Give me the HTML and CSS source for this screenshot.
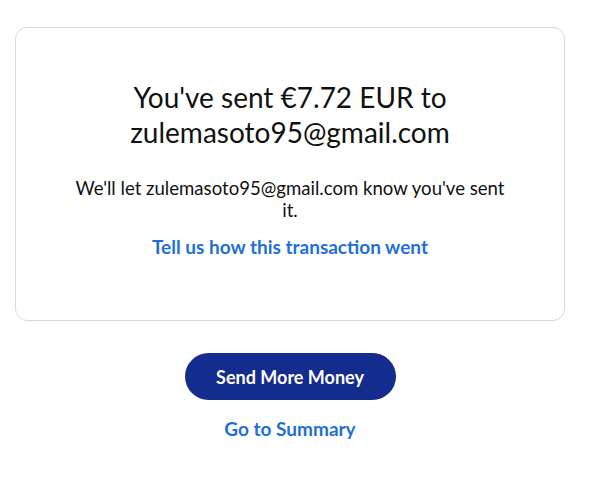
FILE: index.html
```html
<!DOCTYPE html>
<html lang="en">
<head>
<meta charset="utf-8">
<title>Sent</title>
<link rel="stylesheet" href="styles.css">
</head>
<body>
<main class="page">
  <section class="card">
    <h1 class="title">You've sent €7.72 EUR to zulemasoto95@gmail.com</h1>
    <p class="note">We'll let zulemasoto95@gmail.com know you've sent it.</p>
    <a class="link" href="#">Tell us how this transaction went</a>
  </section>
  <div class="actions">
    <button class="btn" type="button">Send More Money</button>
    <a class="link" href="#">Go to Summary</a>
  </div>
</main>
</body>
</html>
```
FILE: styles.css
```css
* { box-sizing: border-box; }
html, body { margin: 0; background: #fff; }
body { font-family: "Lato", "Noto Sans", sans-serif; color: #111; }
.page { width: 550px; margin: 27px 0 0 15px; }
.card {
  border: 1px solid #d9d9d9;
  border-radius: 12px;
  height: 294px;
  padding: 52px 40px 0;
  display: flex;
  flex-direction: column;
  align-items: center;
  text-align: center;
}
.title { font-size: 28px; line-height: 35px; font-weight: 400; margin: 0 0 27px; max-width: 350px; }
.note { font-size: 18.6px; line-height: 22px; margin: 0 0 14px; max-width: 440px; }
.link { color: #1f6fd8; font-weight: 700; font-size: 19px; line-height: 24px; text-decoration: none; }
.actions { display: flex; flex-direction: column; align-items: center; padding-top: 32px; gap: 17px; }
.btn {
  width: 211px; height: 47px; border: 0; border-radius: 24px;
  background: #142c8e; color: #fff; font-family: inherit; font-weight: 700; font-size: 18px;
}
```
